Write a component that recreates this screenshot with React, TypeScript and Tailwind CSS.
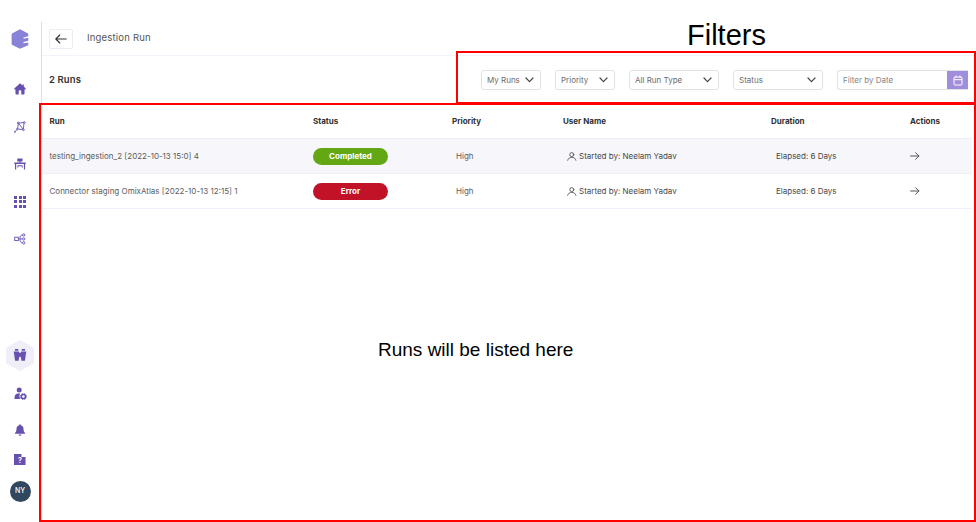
import type { ReactNode } from "react";

const SANS = "font-['Inter','Noto_Sans',sans-serif]";

function Chevron() {
  return (
    <svg width="9" height="6" viewBox="0 0 9 6" fill="none" stroke="#444" strokeWidth="1.2" strokeLinecap="round" strokeLinejoin="round">
      <path d="M1 1l3.5 3.6L8 1" />
    </svg>
  );
}

function Select({ label, className }: { label: string; className: string }) {
  return (
    <button className={`flex h-5 shrink-0 items-center justify-between rounded-[3px] border border-[#e2e2e4] bg-white pl-[5px] pr-[6px] ${className}`}>
      <span className="whitespace-nowrap text-[8px] leading-none text-[#6b6b6b]">{label}</span>
      <Chevron />
    </button>
  );
}

function Logo() {
  return (
    <svg width="18" height="20" viewBox="0 0 18 20">
      <path d="M9 .3l7.6 3.9c.5.3.7.6.7 1.2v1.8l-4.8 1.2v1.3l4.8-.9v3l-4.8 1.2v1.3l4.8-.9v2.3c0 .4-.2.7-.6.9L9 19.8l-7.6-3.9c-.5-.3-.8-.7-.8-1.2V5.4c0-.5.3-.9.8-1.2z" fill="#8882d8" />
    </svg>
  );
}

function HomeIcon() {
  return (
    <svg width="12" height="12" viewBox="0 0 12 12" fill="#6750ae">
      <path d="M6 .3L.3 5.4v1h1.2v4.4c0 .5.3.8.8.8h2.4V8.2c0-.7.4-1 1.3-1s1.3.3 1.3 1v3.4h2.4c.5 0 .8-.3.8-.8V6.4h1.2v-1L9.8 3.6V1.5H8.5v1z" />
    </svg>
  );
}

function GraphIcon() {
  return (
    <svg width="12" height="12" viewBox="0 0 12 12" fill="none" stroke="#6750ae" strokeWidth=".9">
      <path d="M4.6 2.1l5-.6M4.4 2.7l-.8 4.7M5 2.8l3.9 5.3M10 2l-.6 6M4.2 8l4.5.6M3 8.6L.9 10.7" />
      <circle cx="4.2" cy="2" r=".9" />
      <circle cx="10.3" cy="1.5" r=".9" />
      <circle cx="9.4" cy="8.7" r=".9" />
      <circle cx="3.4" cy="8" r=".8" />
      <circle cx=".9" cy="10.9" r=".5" />
    </svg>
  );
}

function DeskIcon() {
  return (
    <svg width="12" height="12" viewBox="0 0 12 12" fill="#6750ae">
      <path d="M3.3.5h5.2v3H3.3zM5.4 3.5h1v1.2h-1zM.3 4.5h11.4v1.6H.3zM1 6h1.2v5.5H1zM9.9 6h1.2v5.5H9.9zM4 7.2h4v1H4zM3.4 7.4h1v2h-1zM7.7 7.4h1v2h-1z" />
    </svg>
  );
}

function GridIcon() {
  return (
    <div className="grid grid-cols-3 gap-[1.5px]">
      {Array.from({ length: 9 }, (_, i) => (
        <span key={i} className="h-[3px] w-[3px] bg-[#6750ae]" />
      ))}
    </div>
  );
}

function BranchIcon() {
  return (
    <svg width="12" height="12" viewBox="0 0 12 12" fill="none" stroke="#6750ae" strokeWidth=".9">
      <rect x=".7" y="4.2" width="3.6" height="3.4" />
      <path d="M4.3 5.9h4M6 5.9c0-2.7.4-3.9 2.4-3.9M6 5.9c0 2.700.4 3.900 2.400 3.900" />
      <circle cx="9.700" cy="2" r="1.200" />
      <circle cx="9.700" cy="5.900" r="1.200" />
      <circle cx="9.700" cy="9.800" r="1.200" />
    </svg>
  );
}

function HexBadge() {
  return (
    <svg width="28" height="31" viewBox="0 0 28 31">
      <path d="M13 .6c.6-.4 1.400-.4 2 0L27 7.200c.7.400 1 .9 1 1.700v13.200c0 .8-.3 1.300-1 1.700l-12 6.600c-.6.400-1.400.4-2 0L1 23.800c-.7-.4-1-.9-1-1.700V8.900c0-.8.3-1.300 1-1.700z" fill="#efeef9" />
      <g fill="#6750ae">
        <path d="M9 9h3.300v1.800H9zM15.700 9H19v1.800h-3.300zM7.700 11.400h5l.6 1.300h1.400l.6-1.300h5L18.900 20.700h-3.400l-.8-4h-1.400l-.8 4H9.100z" />
      </g>
    </svg>
  );
}

function UserGearIcon() {
  return (
    <svg width="13" height="13" viewBox="0 0 13 13" fill="#6750ae">
      <circle cx="5.200" cy="3.100" r="2.500" />
      <path d="M.5 12.100c-.2-3.300.7-5.400 3.200-5.700h2.500C5.200 8 5.100 10.400 6.500 12.100z" />
      <circle cx="9.400" cy="9.500" r="2.100" fill="none" stroke="#6750ae" strokeWidth="1.500" />
      <circle cx="9.400" cy="9.500" r="3.100" fill="none" stroke="#6750ae" strokeWidth=".8" strokeDasharray="1.400 1.030" />
    </svg>
  );
}

function BellIcon() {
  return (
    <svg width="12" height="12" viewBox="0 0 12 12" fill="#6750ae">
      <path d="M6 .2c.5 0 .8.3.8.8v.3c1.700.4 2.700 1.700 2.700 3.500 0 2.200.4 3 1.500 4.100.3.400.1.9-.4.9H1.400c-.5 0-.7-.5-.4-.9 1.100-1.100 1.500-1.900 1.500-4.100 0-1.800 1-3.100 2.700-3.500V1c0-.5.3-.8.8-.8zM4.600 10.500h2.800c0 .8-.6 1.300-1.400 1.300s-1.400-.5-1.400-1.300z" />
    </svg>
  );
}

function HelpFileIcon() {
  return (
    <div className="flex h-3 w-3 items-center justify-center bg-[#6750ae] [clip-path:polygon(0_8%,62%_8%,62%_34%,96%_34%,96%_100%,0_100%)] relative">
      <span className="pt-[2px] text-[7px] font-bold leading-none text-white">?</span>
    </div>
  );
}

function PersonIcon() {
  return (
    <svg width="10" height="9" viewBox="0 0 10 9" fill="none" stroke="#555" strokeWidth=".9" strokeLinecap="round">
      <circle cx="4.800" cy="2.600" r="2" />
      <path d="M.7 8.300c.5-2 2-2.900 4.100-2.900s3.600.9 4.100 2.900" />
    </svg>
  );
}

function RightArrow() {
  return (
    <svg width="10" height="8" viewBox="0 0 10 8" fill="none" stroke="#444" strokeWidth=".9" strokeLinecap="round" strokeLinejoin="round">
      <path d="M.6 4h8.300M5.600.7L8.900 4 5.600 7.300" />
    </svg>
  );
}

function NavItem({ className, children }: { className: string; children: ReactNode }) {
  return <a className={`flex w-10 shrink-0 items-center justify-center ${className}`}>{children}</a>;
}

const COLS = "grid grid-cols-[263.500px_139px_111px_208px_139px_1fr] items-center pl-[7.500px]";

function Row({ run, status, statusClass, rowClass, tracking }: { run: string; status: string; statusClass: string; rowClass: string; tracking: string }) {
  return (
    <div className={`${COLS} mr-1 h-[35px] border-b border-[#f0f0fa] text-[8px] text-[#5c5c5c] ${rowClass}`}>
      <span className={`whitespace-nowrap ${tracking}`}>{run}</span>
      <span className={`flex h-[17px] w-[75px] items-center justify-center rounded-full font-bold text-white ${statusClass}`}>{status}</span>
      <span className="pl-1">High</span>
      <span className="flex items-center gap-[2px] whitespace-nowrap pl-1 text-[#484848]">
        <PersonIcon />
        Started by: Neelam Yadav
      </span>
      <span className="pl-[5px] text-[#484848]">Elapsed: 6 Days</span>
      <span><RightArrow /></span>
    </div>
  );
}

export default function App() {
  return (
    <div className={`relative flex h-[522px] w-[976px] overflow-hidden bg-white ${SANS}`}>
      <nav className="flex w-[41px] shrink-0 flex-col pt-[22px]">
        <NavItem className="h-[34px]"><Logo /></NavItem>
        <NavItem className="mt-[14px] h-[38px]"><HomeIcon /></NavItem>
        <NavItem className="h-[37px]"><GraphIcon /></NavItem>
        <NavItem className="h-[38px]"><DeskIcon /></NavItem>
        <NavItem className="h-[37px]"><GridIcon /></NavItem>
        <NavItem className="h-[38px]"><BranchIcon /></NavItem>
        <NavItem className="mt-[82px] h-[31px]"><HexBadge /></NavItem>
        <NavItem className="mt-[3px] h-[38px]"><UserGearIcon /></NavItem>
        <NavItem className="h-[35px]"><BellIcon /></NavItem>
        <NavItem className="h-[24px]"><HelpFileIcon /></NavItem>
        <NavItem className="mt-[10px] h-[21px]">
          <span className="flex h-[21px] w-[21px] items-center justify-center rounded-full bg-[#30475e] text-[7px] font-medium text-white">NY</span>
        </NavItem>
      </nav>

      <main className="mt-[22px] flex min-w-0 flex-1 flex-col border-l border-[#dedee2]">
        <header className="flex h-[34px] shrink-0 items-center border-b border-[#f3f3fb] pl-[7px]">
          <button className="flex h-5 w-6 items-center justify-center rounded-[2px] border border-[#ededf0]">
            <svg width="12" height="10" viewBox="0 0 12 10" fill="none" stroke="#333" strokeWidth="1.100" strokeLinecap="round" strokeLinejoin="round">
              <path d="M11.200 5H.8M4.800 1L.8 5l4 4" />
            </svg>
          </button>
          <h1 className="ml-[14px] text-[9.500px] tracking-[0.200px] text-[#555]">Ingestion Run</h1>
        </header>

        <section className="flex h-[48px] shrink-0 items-center pl-[7px] pr-[8px]">
          <h2 className="flex-1 text-[9.500px] font-semibold tracking-[0.100px] text-[#333]">2 Runs</h2>
          <div className="flex items-center gap-[14px]">
            <Select label="My Runs" className="w-[60px]" />
            <Select label="Priority" className="w-[60px]" />
            <Select label="All Run Type" className="w-[90px]" />
            <Select label="Status" className="w-[90px]" />
            <div className="flex h-5 w-[131px] overflow-hidden rounded-l-[3px] border border-r-0 border-[#e2e2e4]">
              <span className="flex flex-1 items-center pl-[5px] text-[8px] text-[#858585]">Filter by Date</span>
              <span className="-my-px flex w-[21px] items-center justify-center bg-[#a08ddb]">
                <svg width="10" height="11" viewBox="0 0 10 11" fill="none" stroke="white" strokeWidth="1">
                  <rect x="1" y="2" width="8" height="8" rx="1" />
                  <path d="M1 4.700h8M3 .5v2.500M7 .5v2.500" />
                </svg>
              </span>
            </div>
          </div>
        </section>

        <section className="flex flex-1 flex-col">
          <div className={`${COLS} mr-1 h-[35px] border-b border-[#ececfa] text-[8px] font-bold text-[#303030]`}>
            <span>Run</span>
            <span>Status</span>
            <span>Priority</span>
            <span>User Name</span>
            <span>Duration</span>
            <span>Actions</span>
          </div>
          <Row run="testing_ingestion_2 [2022-10-13 15:0] 4" status="Completed" statusClass="bg-[#64a715]" rowClass="bg-[#f6f6fb]" tracking="tracking-normal" />
          <Row run="Connector staging OmixAtlas [2022-10-13 12:15] 1" status="Error" statusClass="bg-[#c21228]" rowClass="bg-white" tracking="tracking-normal" />
        </section>
      </main>

      <div className="absolute left-[456px] top-[51px] h-[53px] w-[520px] border-2 border-[#ff0000]" />
      <div className="absolute left-[39px] top-[103px] h-[419px] w-[937px] border-2 border-[#ff0000]" />
      <span className="absolute left-[687px] top-[17px] whitespace-nowrap font-['Liberation_Sans',sans-serif] text-[29px] leading-9 text-black">Filters</span>
      <span className="absolute left-[378px] top-[338px] whitespace-nowrap font-['Liberation_Sans',sans-serif] text-[19px] leading-6 text-black">Runs will be listed here</span>
    </div>
  );
}
